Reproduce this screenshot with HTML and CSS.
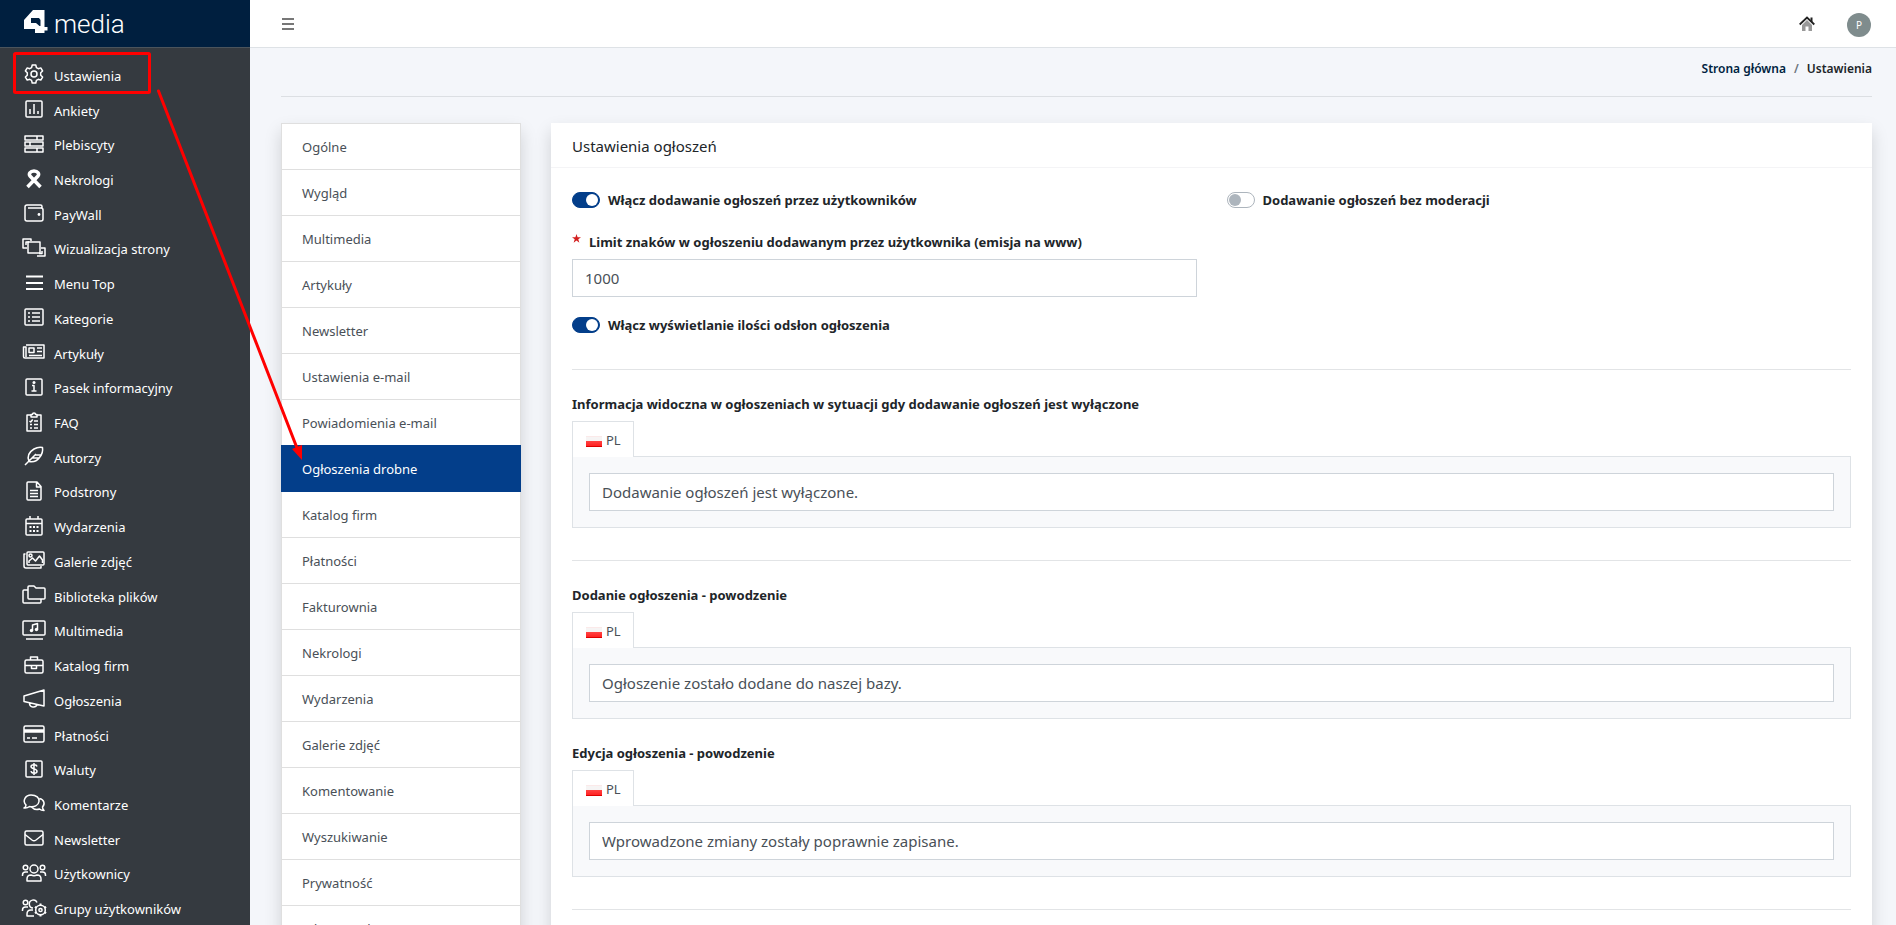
FILE: index.html
```html
<!DOCTYPE html>
<html lang="pl">
<head>
<meta charset="utf-8">
<title>Ustawienia ogłoszeń</title>
<link rel="stylesheet" href="styles.css">
</head>
<body>
<div class="app">
  <aside class="sidebar">
    <a class="brand" href="#">
      <svg class="brand-mark" viewBox="0 0 24 24" aria-hidden="true"><path fill="#fff" fill-rule="evenodd" d="M9 0H20.500V17H23.500V20.500H20.500V23H11V19H0V10ZM7 8V13H12L15.500 16H16.500V10L15 8Z"/></svg>
      <span class="brand-name">media</span>
    </a>
    <nav class="menu">
      <a href="#"><svg class="icon" viewBox="0 0 26 22"><path d="M11.2 2h3.6l.6 2.6 1.9 1.1 2.5-.8 1.8 3.1-1.9 1.8v2.4l1.9 1.8-1.8 3.1-2.5-.8-1.9 1.1-.6 2.6h-3.6l-.6-2.6-1.9-1.1-2.5.8L4.400 14l1.9-1.800V9.800L4.400 8l1.800-3.100 2.500.8 1.900-1.100Z"/><circle cx="13" cy="11" r="3"/></svg><span>Ustawienia</span></a>
      <a href="#"><svg class="icon" viewBox="0 0 26 22"><rect x="5" y="3" width="16" height="16" rx="1"/><path d="M9 11v5M13 6v10M17 13v3"/></svg><span>Ankiety</span></a>
      <a href="#"><svg class="icon" viewBox="0 0 26 22"><rect x="4" y="3" width="18" height="4"/><rect x="4" y="9" width="18" height="4"/><rect x="4" y="15" width="18" height="4"/><path d="M16 3v4M9 9v4M16 15v4"/></svg><span>Plebiscyty</span></a>
      <a href="#"><svg class="icon" viewBox="0 0 26 22"><path class="bold" d="M6.500 19 17 8c1.500-2 0-5-4-5s-5.500 3-4 5l10.500 11"/></svg><span>Nekrologi</span></a>
      <a href="#"><svg class="icon" viewBox="0 0 26 22"><path d="M21 6.500V4.500Q21 3 19.500 3H6Q4 3 4 5v12q0 2 2 2h14q2 0 2-2V8q0-2-2-2H7"/><circle class="solid" cx="18" cy="12.500" r="1.400"/></svg><span>PayWall</span></a>
      <a href="#"><svg class="icon" viewBox="0 0 26 22"><rect x="7" y="5" width="12" height="11"/><path d="M10 4V2H2v9h4M5 8V5h3M16 19h8v-8h-4M18 16.500h3V14"/></svg><span>Wizualizacja strony</span></a>
      <a href="#"><svg class="icon" viewBox="0 0 26 22"><path class="medium" d="M5 4.500h17M5 11h17M5 17h17"/></svg><span>Menu Top</span></a>
      <a href="#"><svg class="icon" viewBox="0 0 26 22"><rect x="4" y="3" width="18" height="16" rx="1"/><path d="M7 7h2M7 11h2M7 15h2M11 7h8M11 11h8M11 15h8"/></svg><span>Kategorie</span></a>
      <a href="#"><svg class="icon" viewBox="0 0 26 22"><path d="M5 4h18v13H4q-1.500 0-1.500-1.500V6H5v10"/><rect x="8" y="7" width="5" height="4.500"/><path d="M16 7h5M16 10.500h5M8 14.500h13"/></svg><span>Artykuły</span></a>
      <a href="#"><svg class="icon" viewBox="0 0 26 22"><rect x="5" y="3" width="16" height="16" rx="1"/><path d="M11 9.500h2V15M10.500 15h5"/><circle class="solid" cx="13" cy="6.500" r="1.500"/></svg><span>Pasek informacyjny</span></a>
      <a href="#"><svg class="icon" viewBox="0 0 26 22"><path d="M10 4H6v16h14V4h-4M10 6h6V3.500h-1.500a1.500 1.500 0 0 0-3 0H10ZM8.500 10l1.200 1 2-2.500M13 10h4M9 13.500h2M13 13.500h4M9 17h2M13 17h4"/></svg><span>FAQ</span></a>
      <a href="#"><svg class="icon" viewBox="0 0 26 22"><path d="M4 20 15 9M8 16.500c-2-5 0-9.500 5-12.500 3-1.700 6-2 8.500-1.500.5 3-.5 7-3 10-2.500 3.500-6 5-10.500 4ZM11 13h7M14 10h6"/></svg><span>Autorzy</span></a>
      <a href="#"><svg class="icon" viewBox="0 0 26 22"><path d="M6 3q0-1 1-1h9l4 4.500V19q0 1-1 1H7q-1 0-1-1ZM15.500 2v5H20M9 10.500h8M9 13.500h8M9 16.500h8"/></svg><span>Podstrony</span></a>
      <a href="#"><svg class="icon" viewBox="0 0 26 22"><rect x="5" y="4" width="16" height="16" rx="1"/><path d="M5 8.500h16M9 1v3M17 1v3"/><path class="medium" d="M8.500 12h2M12 12h2M15.500 12h2M8.500 16h2M12 16h2M15.500 16h2"/></svg><span>Wydarzenia</span></a>
      <a href="#"><svg class="icon" viewBox="0 0 26 22"><rect x="6" y="3" width="17" height="13" rx="1"/><path d="M4.500 5H3v12q0 2 2 2h15v-2M8 14v-2l3.500-3 3 3 4-5 3 4v3"/><circle cx="9.500" cy="6.500" r="1.500"/></svg><span>Galerie zdjęć</span></a>
      <a href="#"><svg class="icon" viewBox="0 0 26 22"><path d="M7 3q0-1 1-1h5l2 2h8q1 0 1 1v9q0 1-1 1H8q-1 0-1-1ZM7 6H3Q2 6 2 7v11q0 1 1 1h16q1 0 1-1v-3"/></svg><span>Biblioteka plików</span></a>
      <a href="#"><svg class="icon" viewBox="0 0 26 22"><rect x="2" y="2" width="22" height="14" rx="1"/><path d="M5 20h17M11.500 11.500V6l5-1.500v6"/><circle class="solid" cx="10.500" cy="11.500" r="1.700"/><circle class="solid" cx="15.500" cy="10.500" r="1.700"/></svg><span>Multimedia</span></a>
      <a href="#"><svg class="icon" viewBox="0 0 26 22"><rect x="4" y="6" width="18" height="13" rx="1.500"/><path d="M9.500 6V3h7v3M4 11.500h18M10.500 12v2.500h5V12"/></svg><span>Katalog firm</span></a>
      <a href="#"><svg class="icon" viewBox="0 0 26 22"><path d="M3 8 23 2v16L3 13.500ZM8.500 15c0 5 6.500 5 7.500 1.500"/></svg><span>Ogłoszenia</span></a>
      <a href="#"><svg class="icon" viewBox="0 0 26 22"><rect x="3" y="3" width="20" height="16" rx="1.500"/><path d="M6 15h3M11 15h5"/><path class="bold" d="M3 8h20"/></svg><span>Płatności</span></a>
      <a href="#"><svg class="icon" viewBox="0 0 26 22"><rect x="5" y="3" width="16" height="16" rx="1"/><path d="M16 8.500c-.5-2.500-6-2.500-6 0 0 3 6 1.700 6 4.700 0 2.600-5.500 2.600-6 0M13 5v12"/></svg><span>Waluty</span></a>
      <a href="#"><svg class="icon" viewBox="0 0 26 22"><path d="M3 16c1.500-.6 2-1.500 2-3C1 8.500 4.500 3 10 3s8.500 3 8 6.500c-.5 4-5 6-9.500 5Q6 16.500 3 16ZM18.500 6.500c4.500 1 6 5.500 3 8.500 0 1.500.5 2.500 1.500 3.500-2 0-3.500-.5-4.500-1.500-3 1-6 .2-8-2"/></svg><span>Komentarze</span></a>
      <a href="#"><svg class="icon" viewBox="0 0 26 22"><rect x="4" y="4" width="18" height="14" rx="1.500"/><path d="m4 7.500 7 5.500q2 1.500 4 0l7-5.500"/></svg><span>Newsletter</span></a>
      <a href="#"><svg class="icon" viewBox="0 0 26 22"><circle cx="13" cy="7" r="4"/><circle cx="4.500" cy="5.500" r="2.300"/><circle cx="21.500" cy="5.500" r="2.300"/><path d="M6 19v-2q0-4 4-4 3 1.300 6 0 4 0 4 4v2ZM1.500 14v-1q0-3 3-3H7M24.500 14v-1q0-3-3-3H19"/></svg><span>Użytkownicy</span></a>
      <a href="#"><svg class="icon" viewBox="0 0 26 22"><path d="M16 5.500a4 4 0 1 0-4 5.500M13 19H6v-2q0-4 4-4h2M1.500 14v-1q0-3 3-3H7"/><circle cx="4.500" cy="5.500" r="2.300"/><circle cx="19.500" cy="13" r="4.800"/><circle cx="19.500" cy="13" r="1.600"/><path class="medium" d="M19.500 6.500v2M19.500 17.500v2M13.900 9.800l1.700 1M23.400 15.200l1.700 1M13.900 16.200l1.700-1M23.400 10.800l1.700-1"/></svg><span>Grupy użytkowników</span></a>
    </nav>
  </aside>

  <div class="page">
    <header class="topbar">
      <button class="toggle" type="button" aria-label="Menu"><svg viewBox="0 0 14 12"><path d="M1 1h12M1 6h12M1 11h12"/></svg></button>
      <div class="topbar-right">
        <a class="home" href="#" aria-label="Strona główna"><svg viewBox="0 0 16 16"><path fill="#999" d="m8 4 5 5v6H9.500v-4.500h-3V15H3V9Z"/><path fill="none" stroke="#222" stroke-width="1.800" d="m.7 8.500 7.300-7 7.300 7"/><path fill="#222" d="M11.500 1.500h2v5l-2-2Z"/></svg></a>
        <a class="avatar" href="#">P</a>
      </div>
    </header>

    <main class="content">
      <nav class="breadcrumb"><a href="#">Strona główna</a><span class="slash">/</span><span>Ustawienia</span></nav>
      <div class="columns">
        <nav class="tabs">
          <a href="#">Ogólne</a>
          <a href="#">Wygląd</a>
          <a href="#">Multimedia</a>
          <a href="#">Artykuły</a>
          <a href="#">Newsletter</a>
          <a href="#">Ustawienia e-mail</a>
          <a href="#">Powiadomienia e-mail</a>
          <a href="#" class="active">Ogłoszenia drobne</a>
          <a href="#">Katalog firm</a>
          <a href="#">Płatności</a>
          <a href="#">Fakturownia</a>
          <a href="#">Nekrologi</a>
          <a href="#">Wydarzenia</a>
          <a href="#">Galerie zdjęć</a>
          <a href="#">Komentowanie</a>
          <a href="#">Wyszukiwanie</a>
          <a href="#">Prywatność</a>
          <a href="#">Własne style CSS</a>
        </nav>

        <form class="card">
          <h1 class="card-title">Ustawienia ogłoszeń</h1>
          <div class="card-body">
            <div class="grid">
              <label class="check"><input class="switch" type="checkbox" checked>Włącz dodawanie ogłoszeń przez użytkowników</label>
              <label class="check"><input class="switch" type="checkbox">Dodawanie ogłoszeń bez moderacji</label>
              <div class="field">
                <label class="label" for="limit"><svg class="star" viewBox="0 0 10 10" aria-hidden="true"><path d="m5 0 1.200 3.500H10L7 5.800 8.200 9.600 5 7.300 1.800 9.600 3 5.800 0 3.500h3.800Z"/></svg>Limit znaków w ogłoszeniu dodawanym przez użytkownika (emisja na www)</label>
                <input class="input" id="limit" type="text" value="1000">
              </div>
              <label class="check views"><input class="switch" type="checkbox" checked>Włącz wyświetlanie ilości odsłon ogłoszenia</label>
            </div>
            <hr>
            <section class="group">
              <label class="label" for="off">Informacja widoczna w ogłoszeniach w sytuacji gdy dodawanie ogłoszeń jest wyłączone</label>
              <button class="lang" type="button"><span class="flag"></span>PL</button>
              <div class="panel"><input class="input" id="off" type="text" value="Dodawanie ogłoszeń jest wyłączone."></div>
            </section>
            <hr>
            <section class="group">
              <label class="label" for="added">Dodanie ogłoszenia - powodzenie</label>
              <button class="lang" type="button"><span class="flag"></span>PL</button>
              <div class="panel"><input class="input" id="added" type="text" value="Ogłoszenie zostało dodane do naszej bazy."></div>
            </section>
            <section class="group">
              <label class="label" for="edited">Edycja ogłoszenia - powodzenie</label>
              <button class="lang" type="button"><span class="flag"></span>PL</button>
              <div class="panel"><input class="input" id="edited" type="text" value="Wprowadzone zmiany zostały poprawnie zapisane."></div>
            </section>
            <hr>
          </div>
        </form>
      </div>
    </main>
  </div>
</div>
<svg class="callout" viewBox="0 0 320 480" aria-hidden="true">
  <rect x="14.500" y="53.500" width="135" height="39" rx="1"/>
  <path d="M158.500 91 297 448"/>
  <path class="head" d="m302 460-10-11 10-4Z"/>
</svg>
</body>
</html>
```
FILE: styles.css
```css
* { box-sizing: border-box; }
body {
  margin: 0;
  font-family: "Noto Sans", "Open Sans", sans-serif;
  font-size: 14px;
  color: #212529;
  background: #f4f6fa;
}
a { color: inherit; text-decoration: none; }
.app { display: flex; height: 100vh; overflow: hidden; }

.sidebar {
  display: flex;
  flex-direction: column;
  flex: none;
  width: 250px;
  color: #fff;
  background: #353a40;
}
.brand {
  display: flex;
  flex: none;
  align-items: center;
  gap: 6px;
  height: 48px;
  padding: 0 24px 3px;
  background: #001f3f;
  border-bottom: 1px solid #4b545c;
}
.brand-mark { width: 24px; height: 24px; }
.brand-name {
  padding-top: 4px;
  font-family: Roboto, sans-serif;
  font-size: 26px;
  font-weight: 300;
  line-height: 40px;
}
.menu {
  display: grid;
  flex: 1;
  grid-auto-rows: 1fr;
  padding: 9px 0 0 21px;
}
.menu a { display: flex; align-items: center; gap: 7px; }
.menu span { padding-top: 3px; font-size: 13px; line-height: 20px; white-space: nowrap; }
.icon {
  width: 26px;
  height: 22px;
  overflow: visible;
  fill: none;
  stroke: #fff;
  stroke-width: 1.500;
  stroke-linejoin: round;
}
.icon .medium { stroke-width: 2; }
.icon .bold { stroke-width: 3.500; }
.icon .solid { fill: #fff; stroke: none; }

.page { flex: 1; min-width: 0; }
.topbar {
  display: flex;
  align-items: center;
  justify-content: space-between;
  height: 48px;
  padding: 0 25px 0 31px;
  background: #fff;
  border-bottom: 1px solid #dee2e6;
}
.toggle { display: flex; padding: 0; border: 0; background: none; }
.toggle svg { width: 14px; height: 12px; stroke: #777; stroke-width: 2; }
.topbar-right { display: flex; align-items: center; gap: 32px; }
.home svg { display: block; width: 16px; height: 16px; }
.avatar {
  display: flex;
  align-items: center;
  justify-content: center;
  width: 24px;
  height: 24px;
  margin-top: 2px;
  border-radius: 50%;
  font-size: 10px;
  color: #fff;
  background: #7f8c8d;
}

.content { padding: 0 24px 0 31px; }
.breadcrumb {
  display: flex;
  justify-content: flex-end;
  gap: 8px;
  height: 49px;
  padding-top: 11px;
  font-size: 12px;
  font-weight: 600;
  line-height: 20px;
  border-bottom: 1px solid #dcdfe3;
}
.breadcrumb a { color: #001f3f; }
.slash { color: #6c757d; }
.columns { display: flex; align-items: flex-start; gap: 30px; padding-top: 26px; }

.tabs {
  flex: none;
  width: 240px;
  background: #fff;
  border: 1px solid #dfdfdf;
  box-shadow: 0 8px 16px rgba(0, 0, 0, .15);
}
.tabs a {
  display: block;
  height: 46px;
  padding: 12px 20px;
  font-size: 13px;
  line-height: 22px;
  color: #495057;
  border-bottom: 1px solid #dfdfdf;
}
.tabs .active {
  margin: -1px -1px 0;
  height: 47px;
  padding: 13px 21px;
  color: #fff;
  background: #033e8a;
  border-color: #033e8a;
}

.card {
  flex: 1;
  min-width: 0;
  background: #fff;
  box-shadow: 0 8px 16px rgba(0, 0, 0, .15);
}
.card-title {
  margin: 0;
  padding: 12px 21px 10px;
  font-size: 15px;
  font-weight: 400;
  line-height: 22px;
  border-bottom: 1px solid #f4f4f6;
}
.card-body { padding: 20px 21px; }
.grid { display: grid; grid-template-columns: 1fr 1fr; column-gap: 30px; }
.check, .label { font-size: 13px; font-weight: 700; line-height: 24px; }
.check { display: flex; align-items: center; gap: 8px; }
.views { grid-column: 1; }
.field { grid-column: 1; padding: 18px 0 16px; }
.label { display: flex; align-items: center; margin-bottom: 5px; }
.star { width: 9px; height: 9px; margin: 0 8px 8px 0; fill: #d31f1f; }
.switch {
  appearance: none;
  display: flex;
  align-items: center;
  width: 28px;
  height: 16px;
  margin: 0;
  padding: 0 1px;
  border: 1px solid #adb5bd;
  border-radius: 8px;
  background: #fff;
}
.switch::before { content: ""; width: 12px; height: 12px; border-radius: 50%; background: #adb5bd; }
.switch:checked { justify-content: flex-end; border-color: #033e8a; background: #033e8a; }
.switch:checked::before { background: #fff; }
.input {
  display: block;
  width: 100%;
  height: 38px;
  padding: 0 12px;
  border: 1px solid #ced4da;
  font-family: inherit;
  font-size: 15px;
  color: #495057;
  background: #fff;
}
hr { height: 1px; margin: 32px 0 22px; border: 0; background: #e2e4e6; }
.group { margin-bottom: 22px; }
.lang {
  display: flex;
  align-items: center;
  gap: 4px;
  height: 36px;
  margin-bottom: -1px;
  padding: 0 12px 0 13px;
  border: 1px solid #dee2e6;
  border-bottom: 0;
  position: relative;
  font-family: inherit;
  font-size: 13px;
  color: #495057;
  background: #fff;
}
.flag {
  width: 16px;
  height: 11px;
  margin-top: 4px;
  background: linear-gradient(#fbe9e9 1px, #f6f4f4 1px 5px, #f44 5px, #f22 10px, #d00 10px);
}
.panel { padding: 16px; border: 1px solid #dee2e6; background: #f8f9fb; }

.callout {
  position: absolute;
  top: 0;
  left: 0;
  width: 320px;
  height: 480px;
  pointer-events: none;
  fill: none;
  stroke: #f00;
  stroke-width: 3;
  stroke-linecap: round;
}
.callout .head { fill: #f00; stroke: none; }
```
